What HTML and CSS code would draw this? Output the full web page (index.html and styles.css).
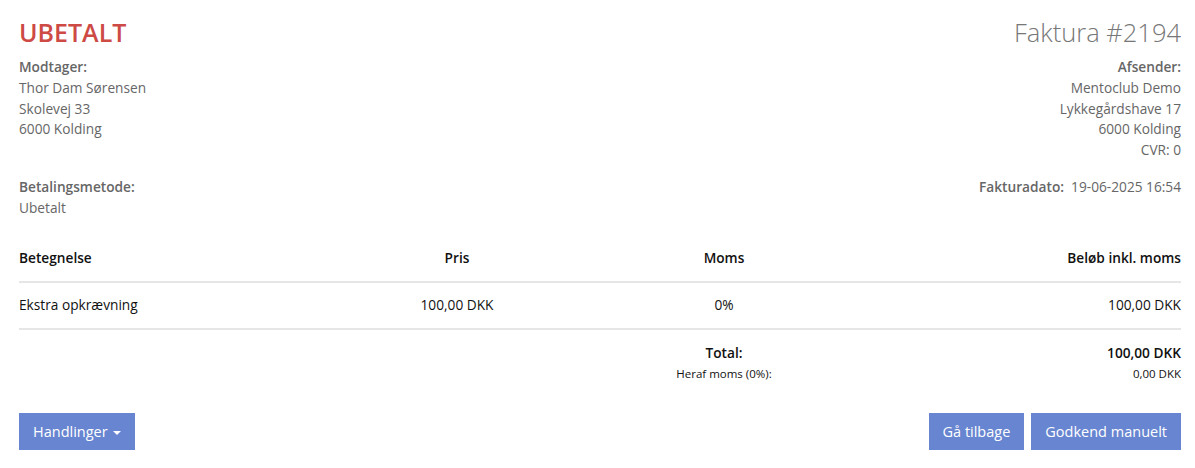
FILE: index.html
```html
<!DOCTYPE html>
<html lang="da">
<head>
    <meta charset="UTF-8">
    <meta name="viewport" content="width=device-width, initial-scale=1.0">
    <title>Faktura #2194</title>
    <link rel="stylesheet" href="styles.css">
</head>
<body>
    <div class="invoice">
        <div class="head">
            <h1 class="status">UBETALT</h1>
            <h2 class="number">Faktura #2194</h2>
        </div>

        <div class="parties">
            <div class="party">
                <strong>Modtager:</strong>
                <div>Thor Dam Sørensen</div>
                <div>Skolevej 33</div>
                <div>6000 Kolding</div>
            </div>
            <div class="party right">
                <strong>Afsender:</strong>
                <div>Mentoclub Demo</div>
                <div>Lykkegårdshave 17</div>
                <div>6000 Kolding</div>
                <div>CVR: 0</div>
            </div>
        </div>

        <div class="meta">
            <div class="party">
                <strong>Betalingsmetode:</strong>
                <div>Ubetalt</div>
            </div>
            <div class="party right">
                <strong>Fakturadato:</strong>&nbsp; 19-06-2025 16:54
            </div>
        </div>

        <div class="lines">
            <div class="row head-row">
                <div>Betegnelse</div>
                <div class="center">Pris</div>
                <div class="center">Moms</div>
                <div class="right">Beløb inkl. moms</div>
            </div>
            <div class="row">
                <div>Ekstra opkrævning</div>
                <div class="center">100,00 DKK</div>
                <div class="center">0%</div>
                <div class="right">100,00 DKK</div>
            </div>
            <div class="totals">
                <div></div>
                <div></div>
                <div class="center total-label">Total:</div>
                <div class="right total-value">100,00 DKK</div>
                <div></div>
                <div></div>
                <div class="center small">Heraf moms (0%):</div>
                <div class="right small">0,00 DKK</div>
            </div>
        </div>

        <div class="actions">
            <button class="btn">Handlinger <span class="caret"></span></button>
            <div class="action-group">
                <button class="btn">Gå tilbage</button>
                <button class="btn">Godkend manuelt</button>
            </div>
        </div>
    </div>
</body>
</html>
```

FILE: styles.css
```css
body {
    margin: 0;
    padding: 0;
    font-family: "Open Sans", Arial, sans-serif;
    font-size: 13.7px;
    line-height: 20.8px;
    color: #333333;
    background-color: #ffffff;
}

.invoice {
    padding: 15px 14px 0 19px;
}

.head {
    display: flex;
    justify-content: space-between;
    align-items: center;
}

.status {
    margin: 0;
    font-size: 25px;
    line-height: 34px;
    font-weight: 600;
    color: #cd4a45;
}

.number {
    margin: 0;
    font-size: 25.5px;
    line-height: 34px;
    font-weight: 300;
    color: #777777;
}

.parties, .meta {
    display: flex;
    justify-content: space-between;
    color: #666666;
}

.parties {
    margin-top: 8px;
}

.meta {
    margin-top: 16px;
}

.party strong {
    font-weight: 600;
}

.right {
    text-align: right;
}

.center {
    text-align: center;
}

.lines {
    margin-top: 17px;
    color: #111111;
}

.row, .totals {
    display: grid;
    grid-template-columns: 305px 266px 268px 1fr;
    line-height: 20px;
}

.row {
    padding: 12px 0 13px;
    border-bottom: 2px solid #e6e6e6;
}

.head-row div {
    font-weight: 600;
}

.totals {
    padding-top: 13px;
}

.total-label, .total-value {
    font-weight: 600;
}

.small {
    font-size: 11.5px;
    line-height: 22px;
}

.actions {
    margin-top: 28px;
    display: flex;
    justify-content: space-between;
}

.action-group {
    display: flex;
    gap: 7px;
}

.btn {
    height: 37px;
    padding: 0 14px;
    border: none;
    border-radius: 0;
    background-color: #6785d0;
    color: #ffffff;
    font-family: "Open Sans", Arial, sans-serif;
    font-size: 14.5px;
    cursor: pointer;
}

.btn:hover {
    background-color: #5873bd;
}

.caret {
    display: inline-block;
    width: 0;
    height: 0;
    margin-left: 2px;
    vertical-align: middle;
    border-top: 4px solid #ffffff;
    border-left: 4px solid transparent;
    border-right: 4px solid transparent;
}
```
